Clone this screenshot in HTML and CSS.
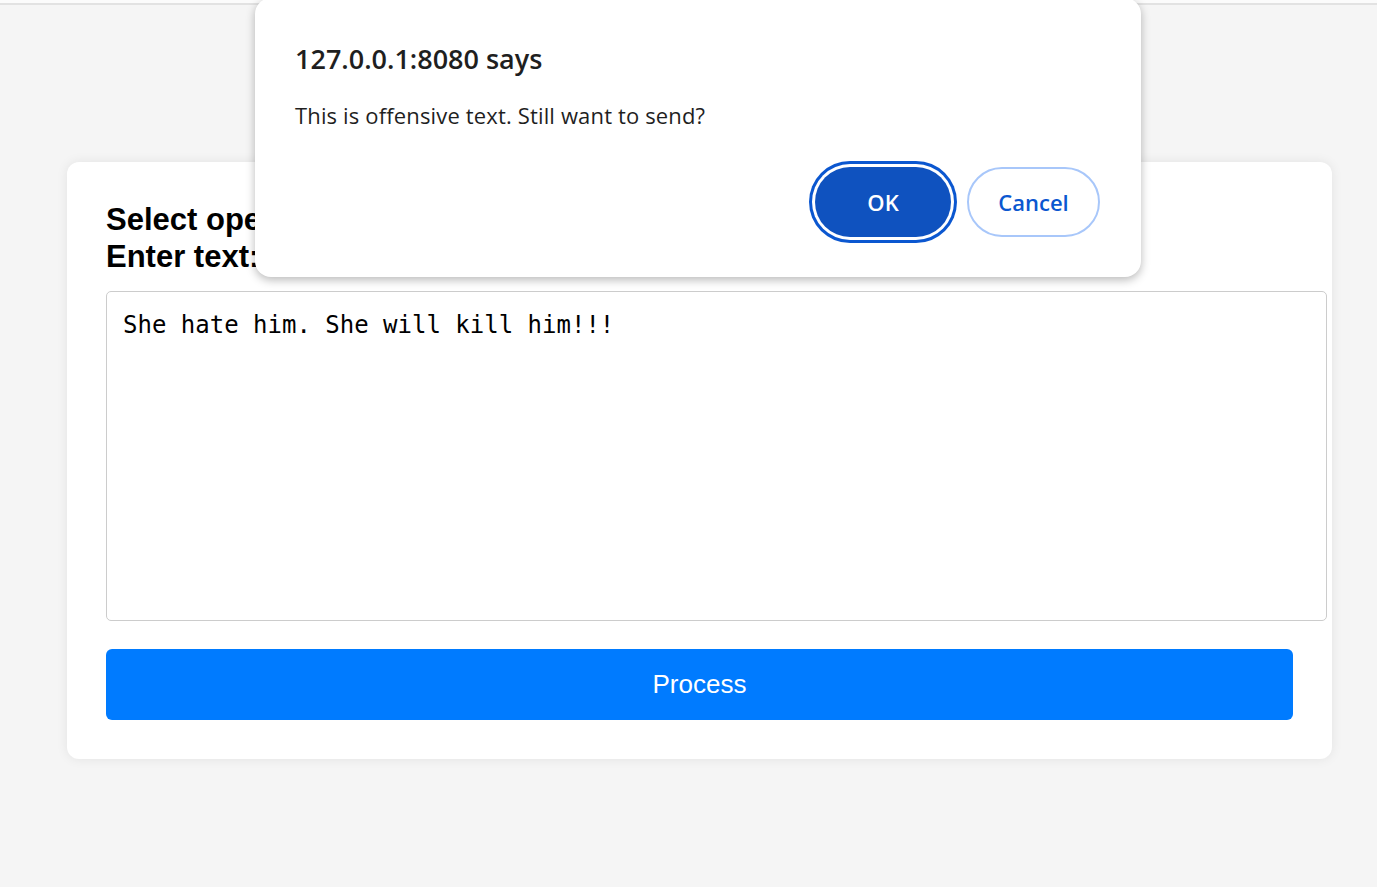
FILE: index.html
```html
<!DOCTYPE html>
<html lang="en">
<head>
<meta charset="utf-8">
<title>Text check</title>
<link rel="stylesheet" href="styles.css">
</head>
<body>
<div class="chrome-edge"></div>
<main class="page">
  <section class="card">
    <h2 class="card-title">Select operation:<br>Enter text:</h2>
    <textarea class="text-input">She hate him. She will kill him!!!</textarea>
    <button class="process-btn" type="button">Process</button>
  </section>
</main>

<div class="dialog" role="alertdialog">
  <div class="dialog-title">127.0.0.1:8080 says</div>
  <div class="dialog-msg">This is offensive text. Still want to send?</div>
  <div class="dialog-actions">
    <button class="btn-ok" type="button">OK</button>
    <button class="btn-cancel" type="button">Cancel</button>
  </div>
</div>
</body>
</html>
```
FILE: styles.css
```css
* { box-sizing: border-box; }
html, body { margin: 0; padding: 0; }
body {
  background: #f5f5f5;
  font-family: "Liberation Sans", Arial, sans-serif;
  width: 1377px;
  height: 887px;
  overflow: hidden;
  position: relative;
}
.chrome-edge {
  height: 5px;
  background: #fbfbfb;
  border-bottom: 2px solid #e2e2e2;
}
.page {
  padding: 157px 45px 0 67px;
}
.card {
  background: #fff;
  border-radius: 12px;
  box-shadow: 0 0 12px rgba(0, 0, 0, 0.08);
  padding: 39px;
  display: flex;
  flex-direction: column;
}
.card-title {
  margin: 0 0 16px 0;
  font-size: 31px;
  font-weight: bold;
  line-height: 37px;
  color: #000;
}
.text-input {
  box-sizing: content-box;
  width: 100%;
  height: 296px;
  padding: 19px 16px 13px 16px;
  border: 1px solid #cccccc;
  border-radius: 5px;
  font-family: "DejaVu Sans Mono", monospace;
  font-size: 24px;
  color: #000;
  resize: none;
  margin: 0 0 28px 0;
  background: #fff;
  outline: none;
}
.process-btn {
  height: 71px;
  border: none;
  border-radius: 6px;
  background: #007bff;
  color: #fff;
  font-family: "Liberation Sans", Arial, sans-serif;
  font-size: 26px;
}
.dialog {
  position: absolute;
  left: 255px;
  top: -2px;
  width: 886px;
  height: 279px;
  background: #fff;
  border-radius: 16px;
  box-shadow: 0 3px 10px rgba(0, 0, 0, 0.28);
  padding: 40px 41px 40px 40px;
  display: flex;
  flex-direction: column;
  font-family: "Open Sans", "Noto Sans", sans-serif;
  color: #1f1f1f;
}
.dialog-title {
  font-size: 27px;
  font-weight: 600;
  line-height: 36px;
  margin-top: 3px;
}
.dialog-msg {
  font-size: 22px;
  letter-spacing: 0.15px;
  line-height: 30px;
  margin-top: 23px;
}
.dialog-actions {
  margin-top: auto;
  display: flex;
  justify-content: flex-end;
  gap: 16px;
}
.btn-ok, .btn-cancel {
  height: 70px;
  border-radius: 35px;
  font-family: "Open Sans", "Noto Sans", sans-serif;
  font-size: 22px;
  font-weight: 600;
}
.btn-ok {
  width: 136px;
  background: #0f52bf;
  color: #fff;
  border: none;
  box-shadow: 0 0 0 3px #fff, 0 0 0 6px #0b57d0;
}
.btn-cancel {
  width: 133px;
  background: #fff;
  color: #0b57d0;
  border: 2px solid #a8c7fa;
}
```
